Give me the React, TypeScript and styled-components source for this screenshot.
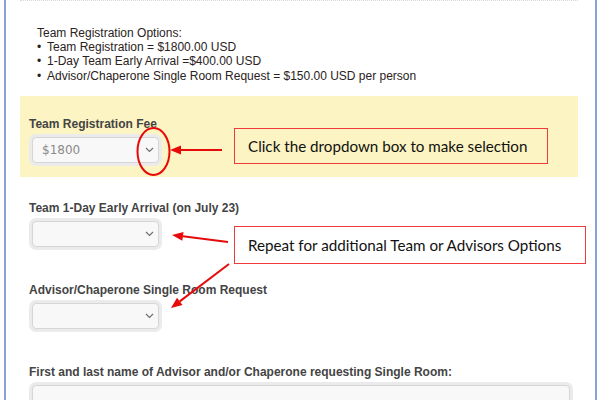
import React from "react";
import styled, { createGlobalStyle } from "styled-components";

const GlobalStyle = createGlobalStyle`
  html, body {
    margin: 0;
    padding: 0;
    background: #ffffff;
  }
  body {
    font-family: "Liberation Sans", Arial, sans-serif;
  }
`;

const Frame = styled.div`
  position: relative;
  width: 589px;
  height: 400px;
  margin-left: 4px;
  border-left: 2px solid #86a2da;
  border-right: 2px solid #86a2da;
  overflow: hidden;
  background: #ffffff;
`;

const Content = styled.div`
  width: 558px;
  margin-left: 14px;
  border-top: 1px dotted #d8d8d8;
  display: flex;
  flex-direction: column;
`;

const Options = styled.div`
  padding: 25px 0 0 17px;
  font-size: 12px;
  line-height: 14.2px;
  color: #2a2222;
`;

const OptionList = styled.ul`
  margin: 0;
  padding: 0;
  list-style: none;
`;

const OptionItem = styled.li`
  display: flex;
  gap: 4px;
  &::before {
    content: "•";
    width: 6px;
  }
`;

const Highlight = styled.div`
  margin-top: 13px;
  background: #fcf4c2;
  padding: 21px 0 9px;
  height: 81px;
  box-sizing: border-box;
`;

const Field = styled.div<{ $top?: number }>`
  display: flex;
  flex-direction: column;
  gap: 3px;
  padding-left: 9px;
  margin-top: ${({ $top }) => $top ?? 0}px;
`;

const Label = styled.label`
  font-size: 12px;
  line-height: 14px;
  font-weight: bold;
  color: #444444;
`;

const Halo = styled.div<{ $wide?: boolean }>`
  width: ${({ $wide }) => ($wide ? 544 : 133)}px;
  padding: 3px;
  box-sizing: border-box;
  background: #ebebeb;
  border-radius: 7px;
`;

const SelectBox = styled.div`
  height: 26px;
  box-sizing: border-box;
  display: flex;
  align-items: center;
  justify-content: space-between;
  padding: 0 4px 0 9px;
  background: #f8f8f8;
  border: 1px solid #d6d6d6;
  border-radius: 4px;
  font-family: "DejaVu Sans", Verdana, sans-serif;
  font-size: 12px;
  color: #8a8a8a;
`;

const TextBox = styled.div`
  height: 40px;
  background: #f8f8f8;
  border: 1px solid #d6d6d6;
  border-radius: 4px;
`;

const Callout = styled.div<{ $top: number; $width: number; $height: number }>`
  position: absolute;
  left: 228px;
  top: ${({ $top }) => $top}px;
  width: ${({ $width }) => $width}px;
  height: ${({ $height }) => $height}px;
  box-sizing: border-box;
  border: 1px solid #ef3a3a;
  display: flex;
  align-items: center;
  padding-left: 13px;
  font-family: Lato, "Open Sans", sans-serif;
  font-size: 15.2px;
  color: #111111;
`;

const Overlay = styled.svg`
  position: absolute;
  left: -6px;
  top: 0;
  pointer-events: none;
`;

const Chevron = () => (
  <svg width="9" height="6" viewBox="0 0 9 6">
    <polyline points="1,1 4.5,4.5 8,1" fill="none" stroke="#707070" strokeWidth="1.2" />
  </svg>
);

const Select = ({ value }: { value?: string }) => (
  <Halo>
    <SelectBox>
      <span>{value ?? ""}</span>
      <Chevron />
    </SelectBox>
  </Halo>
);

const Arrow = ({ x1, y1, x2, y2 }: { x1: number; y1: number; x2: number; y2: number }) => {
  const a = Math.atan2(y2 - y1, x2 - x1);
  const len = 11;
  const w = 4.5;
  const bx = x2 - len * Math.cos(a);
  const by = y2 - len * Math.sin(a);
  const px = -Math.sin(a) * w;
  const py = Math.cos(a) * w;
  return (
    <g>
      <line x1={x1} y1={y1} x2={bx} y2={by} stroke="#e60a0a" strokeWidth="2" />
      <polygon
        points={`${x2},${y2} ${bx + px},${by + py} ${bx - px},${by - py}`}
        fill="#e60a0a"
      />
    </g>
  );
};

export default function App() {
  return (
    <>
      <GlobalStyle />
      <Frame>
        <Content>
          <Options>
            Team Registration Options:
            <OptionList>
              <OptionItem>Team Registration = $1800.00 USD</OptionItem>
              <OptionItem>1-Day Team Early Arrival =$400.00 USD</OptionItem>
              <OptionItem>Advisor/Chaperone Single Room Request = $150.00 USD per person</OptionItem>
            </OptionList>
          </Options>

          <Highlight>
            <Field>
              <Label>Team Registration Fee</Label>
              <Select value="$1800" />
            </Field>
          </Highlight>

          <Field $top={24}>
            <Label>Team 1-Day Early Arrival (on July 23)</Label>
            <Select />
          </Field>

          <Field $top={33}>
            <Label>Advisor/Chaperone Single Room Request</Label>
            <Select />
          </Field>

          <Field $top={33}>
            <Label>First and last name of Advisor and/or Chaperone requesting Single Room:</Label>
            <Halo $wide>
              <TextBox />
            </Halo>
          </Field>
        </Content>

        <Callout $top={128} $width={314} $height={36}>
          Click the dropdown box to make selection
        </Callout>
        <Callout $top={226} $width={352} $height={38}>
          Repeat for additional Team or Advisors Options
        </Callout>

        <Overlay width="600" height="400" viewBox="0 0 600 400">
          <ellipse cx="153.5" cy="151.5" rx="16" ry="23.5" fill="none" stroke="#e60a0a" strokeWidth="2" />
          <Arrow x1={222} y1={150} x2={170} y2={150} />
          <Arrow x1={228} y1={242} x2={172} y2={235} />
          <Arrow x1={229} y1={264} x2={171} y2={308} />
        </Overlay>
      </Frame>
    </>
  );
}
